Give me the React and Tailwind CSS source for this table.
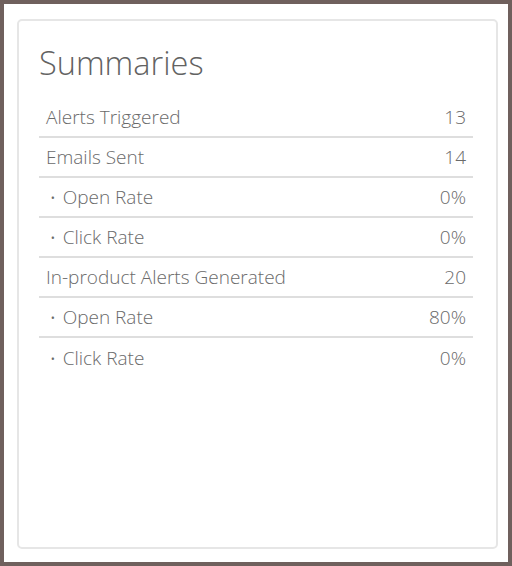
const ROWS = [
  { label: "Alerts Triggered", value: "13" },
  { label: "Emails Sent", value: "14" },
  { label: "Open Rate", value: "0%", sub: true },
  { label: "Click Rate", value: "0%", sub: true },
  { label: "In-product Alerts Generated", value: "20" },
  { label: "Open Rate", value: "80%", sub: true },
  { label: "Click Rate", value: "0%", sub: true, last: true },
];

export default function App() {
  return (
    <div className="h-[566px] w-[512px] border-4 border-[#6f605d] bg-white pt-[15px] pl-[13px] pr-[10px] pb-[13px] font-['Open_Sans',sans-serif] font-light text-[#6a6a6a]">
      <div className="h-full rounded-[5px] border-2 border-[#e6e6e6] pl-5 pr-[23px]">
        <h2 className="pt-[24px] pb-[17px] text-[32.5px] leading-[36px] text-[#626262]">Summaries</h2>
        <div>
          {ROWS.map((r, i) => (
            <div
              key={i}
              className={`flex h-10 items-center justify-between px-[7px] text-[19px] ${
                r.last ? "" : "border-b-2 border-[#dedede]"
              }`}
            >
              <span className="flex items-center">
                {r.sub && <span className="ml-[4px] mr-[7px] text-[15px]">•</span>}
                {r.label}
              </span>
              <span>{r.value}</span>
            </div>
          ))}
        </div>
      </div>
    </div>
  );
}
